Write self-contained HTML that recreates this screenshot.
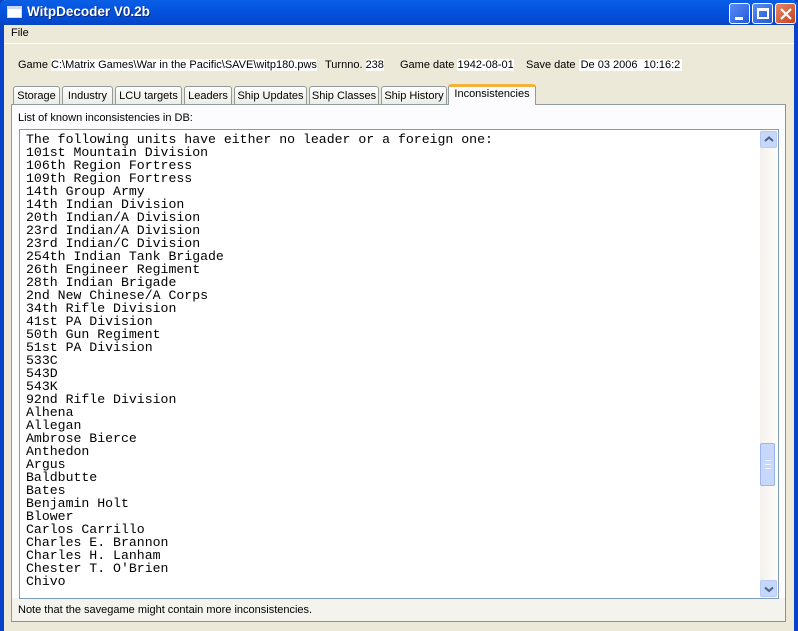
<!DOCTYPE html>
<html><head><style>
*{margin:0;padding:0;box-sizing:border-box}
body{width:798px;height:631px;overflow:hidden;background:#ece9d8;font-family:"Liberation Sans",sans-serif;font-size:11px;position:relative}
.abs{position:absolute}
#title{left:0;top:0;width:798px;height:25px;background:linear-gradient(#0a5fe6,#0454e0 40%,#0349d1 85%,#0a46b8);border-radius:6px 6px 0 0}
#title span{position:absolute;left:27px;top:4px;color:#fff;font-weight:bold;font-size:13.5px;text-shadow:1px 1px #0b2a7a}
.btn{top:3px;width:21px;height:21px;border:1px solid #fff;border-radius:3px;background:linear-gradient(135deg,#5a8cf5,#2358d8)}
.tab{top:86px;height:19px;border:1px solid #919b9c;border-bottom:none;background:linear-gradient(#fefefe,#ecebe6);border-radius:3px 3px 0 0;padding:3px 0 0 0;text-align:center;color:#000}
.line{font-family:"Liberation Mono",monospace;font-size:13.2px;line-height:13px;color:#000;white-space:pre}
.arr{width:17px;height:17px;border:1px solid #b9cbf3;border-radius:2px;background:#c6d7fc}
</style></head><body>
<div class="abs" style="left:0;top:0;width:4px;height:631px;background:#0842c8"></div>
<div class="abs" style="right:0;top:0;width:4px;height:631px;background:#0842c8"></div>
<div id="title" class="abs"><div class="abs" style="left:7px;top:6px;width:15px;height:12px;background:#fff;border:1px solid #cfd8f0;border-top:3px solid #cfd8f0"></div><span>WitpDecoder V0.2b</span></div>
<div class="abs btn" style="left:729px"><div class="abs" style="left:5px;top:13px;width:8px;height:3px;background:#fff"></div></div>
<div class="abs btn" style="left:752px"><div class="abs" style="left:4px;top:4px;width:12px;height:11px;border:2px solid #fff;border-top-width:3px"></div></div>
<div class="abs btn" style="left:775px;background:linear-gradient(135deg,#e88a6a,#c6401a)"><svg class="abs" style="left:4px;top:4px" width="12" height="12"><path d="M1 1L11 11M11 1L1 11" stroke="#fff" stroke-width="2.2"/></svg></div>
<div class="abs" style="left:11px;top:27px;font-size:11px">File</div>
<div class="abs" style="left:4px;top:43px;width:790px;height:1px;background:#fff"></div>
<div class="abs" style="left:18px;top:59px">Game <span style="background:#fff">C:\Matrix Games\War in the Pacific\SAVE\witp180.pws</span></div>
<div class="abs" style="left:325px;top:59px">Turnno. <span style="background:#fff">238</span></div>
<div class="abs" style="left:400px;top:59px">Game date <span style="background:#fff">1942-08-01</span></div>
<div class="abs" style="left:526px;top:59px">Save date <span style="background:#fff;padding:0 2px">De 03 2006 &nbsp;10:16:2</span></div>
<div class="abs tab" style="left:13px;width:47px">Storage</div>
<div class="abs tab" style="left:62px;width:51px">Industry</div>
<div class="abs tab" style="left:115px;width:67px">LCU targets</div>
<div class="abs tab" style="left:184px;width:48px">Leaders</div>
<div class="abs tab" style="left:234px;width:73px">Ship Updates</div>
<div class="abs tab" style="left:309px;width:70px">Ship Classes</div>
<div class="abs tab" style="left:381px;width:66px">Ship History</div>
<div class="abs" style="left:11px;top:104px;width:775px;height:518px;border:1px solid #919b9c;border-right-color:#8a9192;border-bottom-color:#8a9192;background:#fcfcfe"></div>
<div class="abs" style="left:12px;top:598px;width:773px;height:23px;background:#f4f3ee"></div>
<div class="abs tab" style="left:448px;top:84px;width:88px;height:21px;background:#fcfcfe;border-top:3px solid #f5b23a;padding-top:1px;z-index:2">Inconsistencies</div>
<div class="abs" style="left:18px;top:112px">List of known inconsistencies in DB:</div>
<div class="abs" style="left:19px;top:129px;width:760px;height:470px;border:1px solid #7f9db9;background:#fff;overflow:hidden">
<div class="line" style="position:absolute;left:6px;top:3px">The following units have either no leader or a foreign one:
101st Mountain Division
106th Region Fortress
109th Region Fortress
14th Group Army
14th Indian Division
20th Indian/A Division
23rd Indian/A Division
23rd Indian/C Division
254th Indian Tank Brigade
26th Engineer Regiment
28th Indian Brigade
2nd New Chinese/A Corps
34th Rifle Division
41st PA Division
50th Gun Regiment
51st PA Division
533C
543D
543K
92nd Rifle Division
Alhena
Allegan
Ambrose Bierce
Anthedon
Argus
Baldbutte
Bates
Benjamin Holt
Blower
Carlos Carrillo
Charles E. Brannon
Charles H. Lanham
Chester T. O'Brien
Chivo</div>
<div class="abs" style="left:740px;top:0;width:18px;height:468px;background:linear-gradient(90deg,#f3f1ec,#fdfdfa)"></div>
<div class="abs arr" style="left:740px;top:1px"><svg class="abs" style="left:3px;top:4px" width="10" height="7"><path d="M1 5L5 1.5L9 5" stroke="#4d6185" stroke-width="2" fill="none"/></svg></div>
<div class="abs" style="left:740px;top:313px;width:15px;height:43px;border:1px solid #9db5ed;border-radius:2px;background:#c8d8fc"><div class="abs" style="left:4px;top:16px;width:6px;height:9px;border-top:1px solid #eef3ff;border-bottom:1px solid #eef3ff"></div><div class="abs" style="left:4px;top:20px;width:6px;height:1px;background:#eef3ff"></div></div>
<div class="abs arr" style="left:740px;top:450px"><svg class="abs" style="left:3px;top:5px" width="10" height="7"><path d="M1 1.5L5 5L9 1.5" stroke="#4d6185" stroke-width="2" fill="none"/></svg></div>
</div>
<div class="abs" style="left:18px;top:604px">Note that the savegame might contain more inconsistencies.</div>
</body></html>
